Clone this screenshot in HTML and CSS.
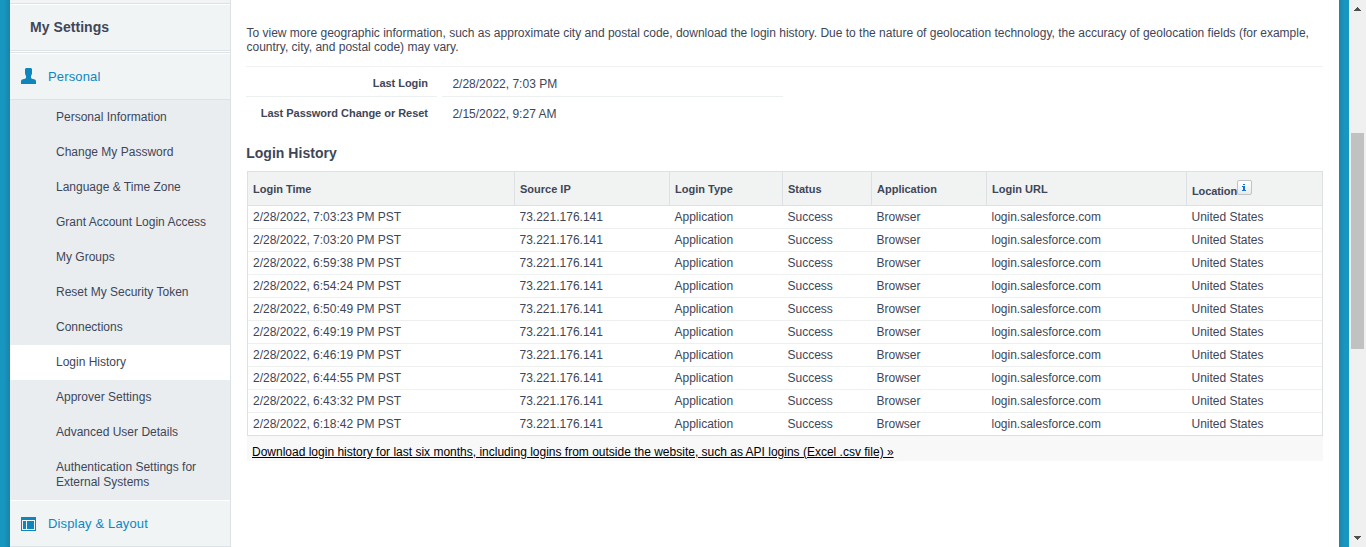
FILE: index.html
```html
<!DOCTYPE html>
<html lang="en">
<head>
<meta charset="utf-8">
<title>Login History</title>
<link rel="stylesheet" href="styles.css">
</head>
<body>
<div class="page">
  <div class="edge edge-left"></div>
  <nav class="sidebar">
    <div class="sidebar-top"></div>
    <h2 class="sidebar-title">My Settings</h2>
    <a class="section section-open">
      <svg class="section-icon" width="15" height="16" viewBox="0 0 15 16"><path fill="#0f86bb" d="M5 0h5l1 1v4.500l-.5 1.500-.5 1v2l1 .8 3 .8 1 1.200V16H0v-3.200l1-1.200 3-.8 1-.8V8l-.5-1L4 5.500V1z"/></svg>
      <span>Personal</span>
    </a>
    <ul class="links">
      <li>Personal Information</li>
      <li>Change My Password</li>
      <li>Language &amp; Time Zone</li>
      <li>Grant Account Login Access</li>
      <li>My Groups</li>
      <li>Reset My Security Token</li>
      <li>Connections</li>
      <li class="current">Login History</li>
      <li>Approver Settings</li>
      <li>Advanced User Details</li>
      <li>Authentication Settings for<br>External Systems</li>
    </ul>
    <a class="section section-last">
      <svg class="section-icon" width="15" height="14" viewBox="0 0 15 14" shape-rendering="crispEdges"><path fill="#0f86bb" fill-rule="evenodd" d="M0 0h15v14H0zM1 3v10h13V3zM2 4h3v8H2zM6 4h7v8H6z"/></svg>
      <span>Display &amp; Layout</span>
    </a>
  </nav>
  <main class="content">
    <p class="intro">To view more geographic information, such as approximate city and postal code, download the login history. Due to the nature of geolocation technology, the accuracy of geolocation fields (for example,<br>country, city, and postal code) may vary.</p>
    <dl class="summary">
      <dt>Last Login</dt><dd>2/28/2022, 7:03 PM</dd>
      <dt class="plain">Last Password Change or Reset</dt><dd class="plain">2/15/2022, 9:27 AM</dd>
    </dl>
    <h3 class="heading">Login History</h3>
    <table class="history">
      <colgroup><col class="c-time"><col class="c-ip"><col class="c-type"><col class="c-status"><col class="c-app"><col class="c-url"><col class="c-loc"></colgroup>
      <thead><tr><th>Login Time</th><th>Source IP</th><th>Login Type</th><th>Status</th><th>Application</th><th>Login URL</th><th class="loc"><div>Location<span class="info"><svg width="15" height="15" viewBox="0 0 15 15" shape-rendering="crispEdges"><path fill="#1273d0" d="M6 4h2v1H6zM5 6h3v4h1v1H5v-1h1V7H5z"/></svg></span></div></th></tr></thead>
      <tbody>
        <tr><td>2/28/2022, 7:03:23 PM PST</td><td>73.221.176.141</td><td>Application</td><td>Success</td><td>Browser</td><td>login.salesforce.com</td><td>United States</td></tr>
        <tr><td>2/28/2022, 7:03:20 PM PST</td><td>73.221.176.141</td><td>Application</td><td>Success</td><td>Browser</td><td>login.salesforce.com</td><td>United States</td></tr>
        <tr><td>2/28/2022, 6:59:38 PM PST</td><td>73.221.176.141</td><td>Application</td><td>Success</td><td>Browser</td><td>login.salesforce.com</td><td>United States</td></tr>
        <tr><td>2/28/2022, 6:54:24 PM PST</td><td>73.221.176.141</td><td>Application</td><td>Success</td><td>Browser</td><td>login.salesforce.com</td><td>United States</td></tr>
        <tr><td>2/28/2022, 6:50:49 PM PST</td><td>73.221.176.141</td><td>Application</td><td>Success</td><td>Browser</td><td>login.salesforce.com</td><td>United States</td></tr>
        <tr><td>2/28/2022, 6:49:19 PM PST</td><td>73.221.176.141</td><td>Application</td><td>Success</td><td>Browser</td><td>login.salesforce.com</td><td>United States</td></tr>
        <tr><td>2/28/2022, 6:46:19 PM PST</td><td>73.221.176.141</td><td>Application</td><td>Success</td><td>Browser</td><td>login.salesforce.com</td><td>United States</td></tr>
        <tr><td>2/28/2022, 6:44:55 PM PST</td><td>73.221.176.141</td><td>Application</td><td>Success</td><td>Browser</td><td>login.salesforce.com</td><td>United States</td></tr>
        <tr><td>2/28/2022, 6:43:32 PM PST</td><td>73.221.176.141</td><td>Application</td><td>Success</td><td>Browser</td><td>login.salesforce.com</td><td>United States</td></tr>
        <tr><td>2/28/2022, 6:18:42 PM PST</td><td>73.221.176.141</td><td>Application</td><td>Success</td><td>Browser</td><td>login.salesforce.com</td><td>United States</td></tr>
      </tbody>
    </table>
    <div class="download"><a>Download login history for last six months, including logins from outside the website, such as API logins (Excel .csv file) »</a></div>
  </main>
  <div class="edge edge-right"></div>
  <div class="scrollbar">
    <svg class="arrow" width="7" height="4" viewBox="0 0 7 4" shape-rendering="crispEdges"><path fill="#505050" d="M3 0h1v1h1v1h1v1h1v1H0V3h1V2h1V1h1z"/></svg>
    <div class="thumb"></div>
    <svg class="arrow" width="7" height="4" viewBox="0 0 7 4" shape-rendering="crispEdges"><path fill="#505050" d="M0 0h7v1H6v1H5v1H4v1H3V3H2V2H1V1H0z"/></svg>
  </div>
</div>
</body>
</html>
```
FILE: styles.css
```css
* { box-sizing: border-box; }
body {
  margin: 0;
  overflow: hidden;
  background: #fff;
  color: #3e4658;
  font: 12px/14px "Liberation Sans", Arial, sans-serif;
}
.page { display: flex; height: 547px; overflow: hidden; }
.edge { flex: none; width: 10px; }
.edge-left { background: linear-gradient(90deg, #1797c0 0, #1797c0 40%, #1a83a9 100%); }
.edge-right { background: linear-gradient(90deg, #1a86ad 0, #1797c0 60%, #1797c0 100%); }

.sidebar {
  flex: none;
  width: 221px;
  background: #f0f4f5;
  border-right: 1px solid #dce2e5;
}
.sidebar-top { height: 5px; border-bottom: 1px solid #fff; box-shadow: inset 0 -1px #dce2e5; }
.sidebar-title {
  margin: 0;
  height: 48px;
  padding: 14px 20px 0;
  font-size: 14px;
  line-height: 16px;
  letter-spacing: 0.05px;
  border-bottom: 3px double #dce2e5;
  background: linear-gradient(#f0f4f5 0 45px, #fff 45px) border-box;
}
.section {
  display: flex;
  align-items: center;
  gap: 12px;
  padding-left: 11px;
  color: #0f86c3;
  font-size: 13px;
  letter-spacing: 0.15px;
  border-bottom: 1px solid #dce2e5;
}
.section-icon { flex: none; }
.section-open { height: 47px; border-top: 1px solid #fff; }
.section-open .section-icon { margin-top: -1px; }
.section-last { height: 47px; border-top: 1px solid #fff; }
.links { margin: 0; padding: 0; list-style: none; background: #e9edf0; }
.links li { padding: 10px 0 10px 46px; line-height: 15px; }
.links .current { background: #fff; }

.content { flex: none; width: 1108px; padding: 26px 16px 0 15px; }
.intro { margin: 0; white-space: nowrap; padding-left: 0.5px; letter-spacing: -0.002px; }
.summary {
  display: grid;
  grid-template-columns: 191px 341px;
  column-gap: 5px;
  margin: 12px 0 0;
  border-top: 1px solid #f0f2f2;
}
.summary dt, .summary dd { height: 30px; margin: 0; border-bottom: 1px solid #ecf0f0; }
.summary dt { padding: 9px 9px 0 0; text-align: right; font-size: 11px; font-weight: bold; letter-spacing: -0.03px; }
.summary dd { padding: 10px 0 0 10.4px; }
.summary .plain { border-bottom: 0; }
.heading { margin: 18px 0 10px; padding-left: 0.2px; font-size: 14px; line-height: 16px; letter-spacing: 0.03px; }
.history {
  width: 1076px;
  margin-left: 1px;
  table-layout: fixed;
  border-collapse: separate;
  border-spacing: 0;
  border: 1px solid #dde1e3;
}
.c-time { width: 267px; }
.c-ip { width: 155px; }
.c-type { width: 113px; }
.c-status { width: 89px; }
.c-app { width: 115px; }
.c-url { width: 200px; }
.history th {
  height: 34px;
  padding: 0 0 0 5px;
  background: #f1f3f3;
  border-right: 1px solid #dde1e3;
  border-bottom: 1px solid #dde1e3;
  font-size: 11px;
  text-align: left;
}
.history th:last-child { border-right: 0; }
.loc div { display: flex; align-items: center; padding-top: 5px; letter-spacing: -0.1px; }
.info {
  width: 15px;
  height: 15px;
  margin-top: -7px;
  border: 1px solid #bfc3c6;
  border-radius: 2px;
  background: linear-gradient(#fff, #e9eaea);
}
.info svg { display: block; margin: -1px; }
.history td { height: 23px; padding: 0 0 0 4.5px; border-bottom: 1px solid #eef0f0; line-height: 14px; }
.history td:first-child { padding-left: 5px; }
.history tr:last-child td { height: 22px; border-bottom: 0; }
.download { width: 1076px; margin-left: 1px; height: 25px; padding: 9px 5px 0; background: #f8f8f8; color: #000; white-space: nowrap; }
.download a { text-decoration: underline; }

.scrollbar {
  flex: none;
  width: 17px;
  display: flex;
  flex-direction: column;
  justify-content: space-between;
  align-items: center;
  padding: 7px 0;
  background: #f0f0f0;
}
.thumb { width: 13px; height: 216px; margin-top: -65px; background: #c1c1c1; }
.arrow { display: block; }
```
